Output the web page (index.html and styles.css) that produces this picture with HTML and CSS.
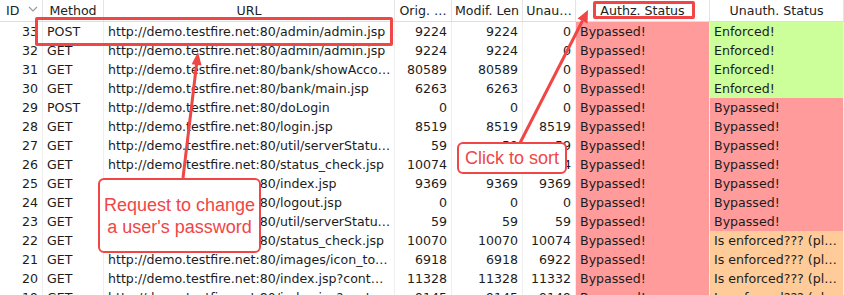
FILE: index.html
```html
<!DOCTYPE html>
<html>
<head>
<meta charset="utf-8">
<link rel="stylesheet" href="styles.css">
</head>
<body>
<div class="page">
  <div class="table">
    <div class="row head">
      <div class="c id-h">ID <svg class="chev" width="10" height="7" viewBox="0 0 10 7"><path d="M1 1 L5 5 L9 1" fill="none" stroke="#9a9a9a" stroke-width="1.2"/></svg></div>
      <div class="c">Method</div>
      <div class="c">URL</div>
      <div class="c">Orig. …</div>
      <div class="c">Modif. Len</div>
      <div class="c">Unau…</div>
      <div class="c">Authz. Status</div>
      <div class="c">Unauth. Status</div>
    </div>

    <div class="row"><div class="c n">33</div><div class="c">POST</div><div class="c">http://demo.testfire.net:80/admin/admin.jsp</div><div class="c n">9224</div><div class="c n">9224</div><div class="c n">0</div><div class="c pink">Bypassed!</div><div class="c green">Enforced!</div></div>
    <div class="row"><div class="c n">32</div><div class="c">GET</div><div class="c">http://demo.testfire.net:80/admin/admin.jsp</div><div class="c n">9224</div><div class="c n">9224</div><div class="c n">0</div><div class="c pink">Bypassed!</div><div class="c green">Enforced!</div></div>
    <div class="row"><div class="c n">31</div><div class="c">GET</div><div class="c">http://demo.testfire.net:80/bank/showAcco…</div><div class="c n">80589</div><div class="c n">80589</div><div class="c n">0</div><div class="c pink">Bypassed!</div><div class="c green">Enforced!</div></div>
    <div class="row"><div class="c n">30</div><div class="c">GET</div><div class="c">http://demo.testfire.net:80/bank/main.jsp</div><div class="c n">6263</div><div class="c n">6263</div><div class="c n">0</div><div class="c pink">Bypassed!</div><div class="c green">Enforced!</div></div>
    <div class="row"><div class="c n">29</div><div class="c">POST</div><div class="c">http://demo.testfire.net:80/doLogin</div><div class="c n">0</div><div class="c n">0</div><div class="c n">0</div><div class="c pink">Bypassed!</div><div class="c pink">Bypassed!</div></div>
    <div class="row"><div class="c n">28</div><div class="c">GET</div><div class="c">http://demo.testfire.net:80/login.jsp</div><div class="c n">8519</div><div class="c n">8519</div><div class="c n">8519</div><div class="c pink">Bypassed!</div><div class="c pink">Bypassed!</div></div>
    <div class="row"><div class="c n">27</div><div class="c">GET</div><div class="c">http://demo.testfire.net:80/util/serverStatu…</div><div class="c n">59</div><div class="c n">59</div><div class="c n">59</div><div class="c pink">Bypassed!</div><div class="c pink">Bypassed!</div></div>
    <div class="row"><div class="c n">26</div><div class="c">GET</div><div class="c">http://demo.testfire.net:80/status_check.jsp</div><div class="c n">10074</div><div class="c n">10074</div><div class="c n">10074</div><div class="c pink">Bypassed!</div><div class="c pink">Bypassed!</div></div>
    <div class="row"><div class="c n">25</div><div class="c">GET</div><div class="c">http://demo.testfire.net:80/index.jsp</div><div class="c n">9369</div><div class="c n">9369</div><div class="c n">9369</div><div class="c pink">Bypassed!</div><div class="c pink">Bypassed!</div></div>
    <div class="row"><div class="c n">24</div><div class="c">GET</div><div class="c">http://demo.testfire.net:80/logout.jsp</div><div class="c n">0</div><div class="c n">0</div><div class="c n">0</div><div class="c pink">Bypassed!</div><div class="c pink">Bypassed!</div></div>
    <div class="row"><div class="c n">23</div><div class="c">GET</div><div class="c">http://demo.testfire.net:80/util/serverStatu…</div><div class="c n">59</div><div class="c n">59</div><div class="c n">59</div><div class="c pink">Bypassed!</div><div class="c pink">Bypassed!</div></div>
    <div class="row"><div class="c n">22</div><div class="c">GET</div><div class="c">http://demo.testfire.net:80/status_check.jsp</div><div class="c n">10070</div><div class="c n">10070</div><div class="c n">10074</div><div class="c pink">Bypassed!</div><div class="c orange">Is enforced??? (pl…</div></div>
    <div class="row"><div class="c n">21</div><div class="c">GET</div><div class="c">http://demo.testfire.net:80/images/icon_to…</div><div class="c n">6918</div><div class="c n">6918</div><div class="c n">6922</div><div class="c pink">Bypassed!</div><div class="c orange">Is enforced??? (pl…</div></div>
    <div class="row"><div class="c n">20</div><div class="c">GET</div><div class="c">http://demo.testfire.net:80/index.jsp?cont…</div><div class="c n">11328</div><div class="c n">11328</div><div class="c n">11332</div><div class="c pink">Bypassed!</div><div class="c orange">Is enforced??? (pl…</div></div>
    <div class="row"><div class="c n">19</div><div class="c">GET</div><div class="c">http://demo.testfire.net:80/index.jsp?cont…</div><div class="c n">9145</div><div class="c n">9145</div><div class="c n">9149</div><div class="c pink">Bypassed!</div><div class="c orange">Is enforced??? (pl…</div></div>
  </div>

  <div class="hl hl-row"></div>
  <div class="hl hl-head"></div>

  <svg class="arrows" width="844" height="295" viewBox="0 0 844 295">
    <line x1="183" y1="178" x2="196.6" y2="64" stroke="#f04646" stroke-width="3"/>
    <polygon points="198,52 201.6,65.5 191.6,64.3" fill="#f04646"/>
    <line x1="520" y1="143" x2="582.5" y2="20.7" stroke="#f04646" stroke-width="3"/>
    <polygon points="588,10 587.5,23.5 577.6,18.4" fill="#f04646"/>
  </svg>

  <div class="callout callout-1">Request to change<br>a user's password</div>
  <div class="callout callout-2">Click to sort</div>
</div>
</body>
</html>
```

FILE: styles.css
```css
html, body {
  margin: 0;
  padding: 0;
  background: #ffffff;
}

.page {
  position: relative;
  width: 844px;
  height: 295px;
  overflow: hidden;
  font-family: "DejaVu Sans", sans-serif;
  font-size: 12.6px;
  color: #1c1c1c;
}

.table {
  display: flex;
  flex-direction: column;
}

.row {
  display: grid;
  grid-template-columns: 43px 61px 291px 57px 71px 53px 134px 134px;
  height: 19px;
  line-height: 19px;
}

.row.head {
  height: 21px;
  line-height: 21px;
  border-bottom: 1px solid #dedede;
  color: #222;
}

.c {
  padding: 0 3px 0 4px;
  white-space: nowrap;
  overflow: hidden;
  border-right: 1px solid #eeeeee;
}

.head .c {
  text-align: center;
  border-right: 1px solid #e4e4e4;
  padding: 0 2px;
}

.head .c.id-h {
  text-align: left;
  padding-left: 6px;
}

.chev {
  margin-left: 5px;
  vertical-align: 2px;
}

.c.n {
  text-align: right;
  padding: 0 4px 0 2px;
}

.pink {
  background: #ff9b9b;
}

.green {
  background: #ccff99;
}

.orange {
  background: #ffcc99;
}

.hl {
  position: absolute;
  border: 3.5px solid #f04646;
  border-radius: 2px;
  box-sizing: border-box;
}

.hl-row {
  left: 35px;
  top: 17px;
  width: 358px;
  height: 29px;
}

.hl-head {
  left: 593px;
  top: 1px;
  width: 102px;
  height: 18px;
  border-width: 3px;
}

.arrows {
  position: absolute;
  left: 0;
  top: 0;
}

.callout {
  position: absolute;
  box-sizing: border-box;
  background: #ffffff;
  border: 2px solid #f04646;
  border-radius: 6px;
  color: #f04646;
  font-family: "Liberation Sans", Arial, sans-serif;
  font-size: 18px;
  line-height: 22px;
  text-align: center;
  display: flex;
  align-items: center;
  justify-content: center;
}

.callout-1 {
  left: 98px;
  top: 178px;
  width: 163px;
  height: 75px;
}

.callout-2 {
  left: 457px;
  top: 142px;
  width: 110px;
  height: 32px;
}
```
